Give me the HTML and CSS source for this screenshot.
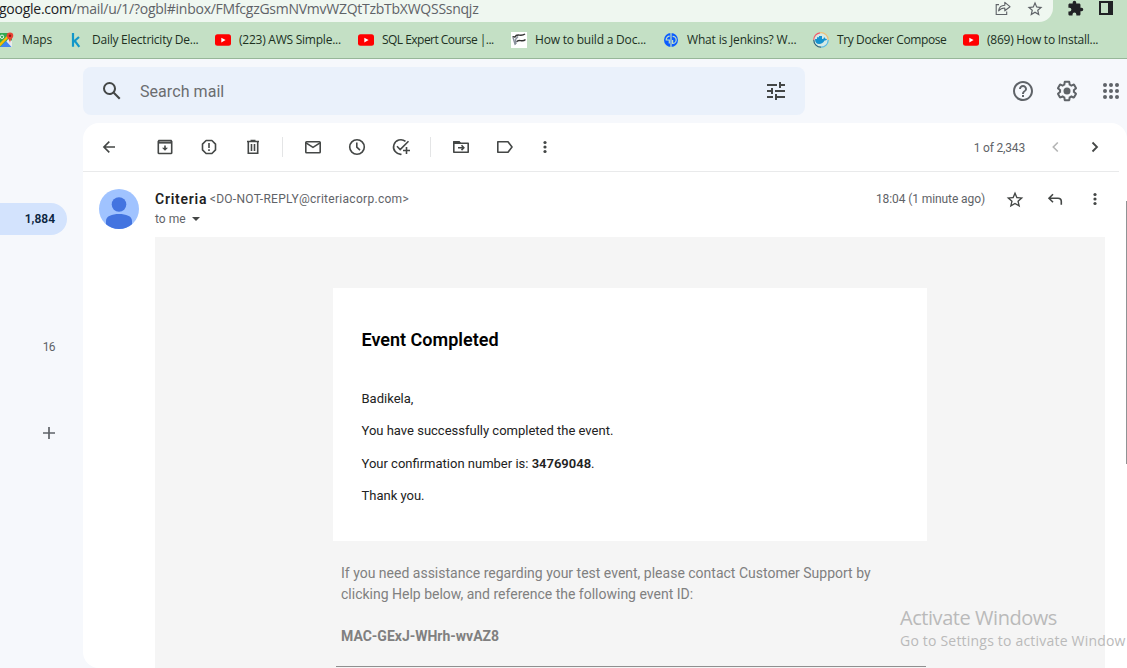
FILE: index.html
```html
<!DOCTYPE html>
<html lang="en">
<head>
<meta charset="utf-8">
<title>Event Completed - Gmail</title>
<link rel="stylesheet" href="styles.css">
</head>
<body>
<div class="window">
  <div class="chrome-top">
    <div class="omnibox">
      <div class="url"><span class="host">google.com</span>/mail/u/1/?ogbl#inbox/FMfcgzGsmNVmvWZQtTzbTbXWQSSsnqjz</div>
      <svg class="share" width="16" height="16" viewBox="0 0 16 16" fill="none" stroke="#5f6368" stroke-width="1.1"><path d="M4 4.6H1.2V14.5H11.7V11.5"/><path d="M3.6 10.8C4 7.4 6.300 5.300 9.800 5.200V2.300L15 6.700L9.800 10.800V8C7.200 8 5.200 8.800 3.600 10.800Z" stroke-linejoin="round"/></svg>
      <svg width="18" height="18" viewBox="0 0 24 24" fill="#5f6368"><path d="M22 9.240l-7.190-.62L12 2 9.190 8.630 2 9.240l5.460 4.730L5.820 21 12 17.270 18.180 21l-1.630-7.030L22 9.240zM12 15.400l-3.760 2.270 1-4.280-3.320-2.880 4.380-.38L12 6.100l1.710 4.040 4.380.38-3.320 2.880 1 4.280L12 15.400z"/></svg>
    </div>
    <svg class="puzzle" width="17" height="17" viewBox="0 0 24 24" fill="#202124"><path d="M20.500 11H19V7c0-1.100-.9-2-2-2h-4V3.500a2.500 2.500 0 0 0-5 0V5H4c-1.100 0-2 .9-2 2v3.800h1.500a2.700 2.700 0 0 1 0 5.400H2V20c0 1.100.9 2 2 2h3.800v-1.500a2.700 2.700 0 0 1 5.400 0V22H17c1.100 0 2-.9 2-2v-4h1.500a2.500 2.500 0 0 0 0-5z"/></svg>
    <div class="sidepanel"></div>
  </div>

  <div class="bookmarks">
    <div class="bm"><svg width="16" height="16" viewBox="0 0 16 16"><rect x="0" y="1" width="14" height="14" rx="1.500" fill="#34a853"/><path d="M4 15L11 6L14 9V15Z" fill="#e8eaed"/><path d="M2 15L8 9L13.500 15Z" fill="#4285f4"/><path d="M0 13L9.500 3.500L11 5L1.500 15H0Z" fill="#fbbc04"/><circle cx="4" cy="4.800" r="1.700" fill="none" stroke="#e6f4ea"/><path d="M12 0.500a3.300 3.300 0 0 1 3.300 3.300c0 2.400-2.700 3.200-3.300 7.200-.6-4-3.300-4.800-3.300-7.200A3.300 3.300 0 0 1 12 .5z" fill="#ea4335"/><circle cx="12" cy="3.800" r="1.200" fill="#8b1a10"/></svg><span class="t1">Maps</span></div>
    <div class="bm"><svg width="16" height="16" viewBox="0 0 16 16" fill="none" stroke="#1297c9" stroke-width="2.200"><path d="M5 1V14.800M5 10.300L11 5M6.800 8.800L11.300 14.800"/></svg><span class="t2">Daily Electricity De...</span></div>
    <div class="bm"><svg width="16" height="16" viewBox="0 0 16 16"><rect y="2.300" width="16" height="11.500" rx="2.500" fill="#f00"/><path d="M6.300 5.700L10.600 8L6.300 10.400Z" fill="#fff"/></svg><span class="t3">(223) AWS Simple...</span></div>
    <div class="bm"><svg width="16" height="16" viewBox="0 0 16 16"><rect y="2.300" width="16" height="11.500" rx="2.500" fill="#f00"/><path d="M6.300 5.700L10.600 8L6.300 10.400Z" fill="#fff"/></svg><span class="t4">SQL Expert Course |...</span></div>
    <div class="bm"><svg width="16" height="16" viewBox="0 0 16 16" fill="none" stroke="#333" stroke-width="1.400"><rect width="16" height="16" fill="#fff" stroke="none"/><path d="M1.500 4.800L4 5C6 .5 9.500 5.500 14 2"/><path d="M5.500 9.800C8 6.300 11 11 14.500 7.500"/><path d="M2 5.500L4.300 13M5 12L4.500 7.500L7 4.500" stroke="#89909c"/></svg><span class="t5">How to build a Doc...</span></div>
    <div class="bm"><svg width="16" height="16" viewBox="0 0 16 16"><circle cx="8" cy="8" r="7" fill="#0b5cff"/><path d="M8 1V15M6.700 4.200A3.500 3.500 0 0 0 3.200 8H6.300V11.500M9.600 4.300A3.600 3.600 0 0 1 9.600 11.500V8" fill="none" stroke="#c4e0c5" stroke-width="1.200"/></svg><span class="t6">What is Jenkins? W...</span></div>
    <div class="bm"><svg width="16" height="16" viewBox="0 0 16 16"><circle cx="8" cy="8" r="7.200" fill="#d4e9e5"/><g fill="none" stroke-width="1.200"><path d="M.8 8A7.200 7.200 0 0 1 7 .8" stroke="#ef5b6b"/><path d="M7 .8A7.200 7.200 0 0 1 15.200 8" stroke="#efc078"/><path d="M15.200 8A7.200 7.200 0 0 1 8 15.200" stroke="#55b9e6"/><path d="M8 15.200A7.200 7.200 0 0 1 .8 8" stroke="#2b5f78"/></g><path d="M2 7H4V5.300H6V4H9V7C10 7 11 6.500 11 5.200C12 5.600 12.300 6.300 12.300 6.700L14 7C13.500 8.500 12.500 8.600 11.500 8.600C10.500 11 8.500 12 6.200 12C3.500 12 2 10.500 2 7Z" fill="#1492cf"/></svg><span class="t7">Try Docker Compose</span></div>
    <div class="bm"><svg width="16" height="16" viewBox="0 0 16 16"><rect y="2.300" width="16" height="11.500" rx="2.500" fill="#f00"/><path d="M6.300 5.700L10.600 8L6.300 10.400Z" fill="#fff"/></svg><span class="t8">(869) How to Install...</span></div>
  </div>

  <div class="gheader">
    <div class="search">
      <svg width="24" height="24" viewBox="0 0 24 24" fill="#444746"><path d="M20.490 19l-5.730-5.730C15.530 12.200 16 10.910 16 9.500A6.500 6.500 0 1 0 9.500 16c1.410 0 2.700-.47 3.770-1.240L19 20.490 20.490 19zM5 9.500C5 7.010 7.010 5 9.500 5S14 7.010 14 9.500 11.990 14 9.500 14 5 11.990 5 9.500z"/></svg>
      <span class="placeholder">Search mail</span>
      <svg width="24" height="24" viewBox="0 0 24 24" fill="#444746"><path d="M3 17v2h6v-2H3zM3 5v2h10V5H3zm10 16v-2h8v-2h-8v-2h-2v6h2zM7 9v2H3v2h4v2h2V9H7zm14 4v-2H11v2h10zm-6-4h2V7h4V5h-4V3h-2v6z"/></svg>
    </div>
    <div class="gicons">
      <svg width="24" height="24" viewBox="0 0 24 24" fill="#5f6368"><path d="M11 18h2v-2h-2v2zm1-16C6.480 2 2 6.480 2 12s4.480 10 10 10 10-4.480 10-10S17.520 2 12 2zm0 18c-4.410 0-8-3.590-8-8s3.590-8 8-8 8 3.590 8 8-3.590 8-8 8zm0-14c-2.210 0-4 1.790-4 4h2c0-1.100.9-2 2-2s2 .9 2 2c0 2-3 1.750-3 5h2c0-2.250 3-2.500 3-5 0-2.210-1.790-4-4-4z"/></svg>
      <svg width="24" height="24" viewBox="0 0 24 24" fill="#5f6368"><path d="M13.850 22.250h-3.700c-.74 0-1.360-.54-1.450-1.270l-.27-1.890c-.27-.14-.53-.29-.79-.46l-1.800.72c-.7.260-1.470-.03-1.810-.65L2.200 15.530c-.35-.66-.2-1.440.36-1.880l1.530-1.190c-.01-.15-.02-.3-.02-.46 0-.15.010-.31.020-.46l-1.520-1.190c-.59-.45-.74-1.260-.37-1.880l1.850-3.190c.34-.62 1.110-.9 1.790-.63l1.810.73c.26-.17.520-.32.780-.46l.27-1.910c.09-.7.710-1.250 1.440-1.250h3.700c.74 0 1.360.54 1.450 1.270l.27 1.890c.27.140.53.290.79.460l1.800-.72c.71-.26 1.480.03 1.820.65l1.840 3.180c.36.660.200 1.440-.36 1.880l-1.520 1.190c.01.150.02.300.02.460s-.01.310-.02.460l1.520 1.190c.56.450.72 1.230.37 1.860l-1.860 3.220c-.34.620-1.110.900-1.800.630l-1.800-.72c-.26.170-.52.320-.78.460l-.27 1.910c-.1.680-.72 1.220-1.460 1.220zm-3.230-2h2.760l.37-2.550.53-.22c.44-.18.880-.44 1.340-.78l.45-.34 2.380.96 1.380-2.400-2.030-1.580.07-.56c.03-.26.060-.51.060-.78s-.03-.53-.06-.78l-.07-.56 2.030-1.580-1.390-2.400-2.390.96-.45-.35c-.42-.32-.87-.58-1.330-.77l-.52-.22-.37-2.550h-2.760l-.37 2.550-.53.210c-.44.190-.88.440-1.340.79l-.45.330-2.380-.95-1.390 2.390 2.030 1.580-.07.560a7 7 0 0 0-.06.790c0 .26.020.53.060.78l.07.560-2.030 1.580 1.380 2.400 2.390-.96.450.350c.43.330.86.580 1.330.77l.53.220.38 2.550z"/><circle cx="12" cy="12" r="3.500"/></svg>
      <svg width="24" height="24" viewBox="0 0 24 24" fill="#5f6368"><circle cx="6" cy="6" r="2"/><circle cx="12" cy="6" r="2"/><circle cx="18" cy="6" r="2"/><circle cx="6" cy="12" r="2"/><circle cx="12" cy="12" r="2"/><circle cx="18" cy="12" r="2"/><circle cx="6" cy="18" r="2"/><circle cx="12" cy="18" r="2"/><circle cx="18" cy="18" r="2"/></svg>
    </div>
  </div>

  <div class="main">
    <div class="sidebar">
      <div class="pill">1,884</div>
      <div class="count">16</div>
      <svg class="plus" width="20" height="20" viewBox="0 0 20 20" fill="none" stroke="#5f6368" stroke-width="1.700"><path d="M10 4V16M4 10H16"/></svg>
    </div>
    <div class="panel">
      <div class="toolbar">
        <svg class="back" width="20" height="20" viewBox="0 0 20 20" fill="none" stroke="#444746" stroke-width="1.600"><path d="M16 10H5.200M10.300 4.600L4.900 10L10.300 15.400"/></svg>
        <svg width="20" height="20" viewBox="0 0 20 20"><path d="M4 3.500H16L16.700 4.500V16A.7 .7 0 0 1 16 16.500H4A.7 .7 0 0 1 3.300 16V4.500Z" fill="none" stroke="#444746" stroke-width="1.600"/><path d="M3.500 3.500H16.500V6.600H3.500Z" fill="#444746"/><path d="M4.500 4.600H15.500" stroke="#aaa" stroke-width=".8"/><path d="M9.200 8.500H10.800V10.800H13L10 13.800L7 10.800H9.200Z" fill="#444746"/></svg>
        <svg width="20" height="20" viewBox="0 0 20 20" fill="none" stroke="#444746" stroke-width="1.600"><path d="M7.100 3.500H12.900L16.500 7.100V12.900L12.900 16.500H7.100L3.500 12.900V7.100Z" stroke-linejoin="round"/><path d="M10 5.900V11M10 12.300V14"/></svg>
        <svg width="20" height="20" viewBox="0 0 20 20" fill="none" stroke="#444746" stroke-width="1.600"><path d="M4 4.500H16M7.500 3.500H12.500M5.300 5V16.200H14.700V5M8.500 7V14M11.500 7V14"/></svg>
        <i class="sep"></i>
        <svg width="20" height="20" viewBox="0 0 20 20" fill="none" stroke="#444746" stroke-width="1.600"><rect x="2.800" y="4.800" width="14.400" height="10.900" rx=".8"/><path d="M3 5.800L10 10.300L17 5.800"/></svg>
        <svg width="20" height="20" viewBox="0 0 20 20" fill="none" stroke="#444746" stroke-width="1.600"><circle cx="10" cy="10" r="7.300"/><path d="M9.800 5.500V10.200L13 13.200"/></svg>
        <svg width="20" height="20" viewBox="0 0 20 20" fill="none" stroke="#444746" stroke-width="1.600"><path d="M14.500 4.400A7.300 7.300 0 1 0 10.500 17.300M6 9.300L9.200 12.500L17.500 4.300M15.500 10V17M12 13.500H19"/></svg>
        <i class="sep"></i>
        <svg width="20" height="20" viewBox="0 0 20 20" fill="none" stroke="#444746" stroke-width="1.600"><path d="M2.800 4.800H8L9.500 6.300H17.200V15.200H2.800Z" stroke-linejoin="round"/><path d="M3 5H8L9 6.300H3Z" fill="#444746"/><path d="M7 10.700H12.500M10.500 8.300L12.800 10.700L10.500 13.100"/></svg>
        <svg width="20" height="20" viewBox="0 0 20 20" fill="none" stroke="#444746" stroke-width="1.600"><path d="M2.800 4.800H13L17 10L13 15.200H2.800Z" stroke-linejoin="round"/></svg>
        <svg class="more" width="20" height="20" viewBox="0 0 20 20" fill="#444746"><circle cx="10" cy="5.500" r="1.600"/><circle cx="10" cy="10" r="1.600"/><circle cx="10" cy="14.500" r="1.600"/></svg>
        <span class="pager">1 of 2,343</span>
        <svg class="prev" width="20" height="20" viewBox="0 0 20 20" fill="none" stroke="#b4b5b5" stroke-width="1.600"><path d="M12.800 5.500L8.300 10L12.800 14.500"/></svg>
        <svg class="next" width="20" height="20" viewBox="0 0 20 20" fill="none" stroke="#444746" stroke-width="1.800"><path d="M7.500 5.500L12 10L7.500 14.500"/></svg>
      </div>
      <div class="mhead">
        <svg class="avatar" width="40" height="40" viewBox="0 0 40 40"><circle cx="20" cy="20" r="20" fill="#a0c3ff"/><circle cx="20" cy="15.500" r="7.300" fill="#4374e0"/><path d="M7 35.200V32C7 27 13 25 20 25S33 27 33 32V35.200A20 20 0 0 1 7 35.200Z" fill="#4374e0"/></svg>
        <div class="from">
          <div class="line1"><b>Criteria</b><span class="email">&lt;DO-NOT-REPLY@criteriacorp.com&gt;</span></div>
          <div class="line2"><span class="tome">to me</span><i class="caret"></i></div>
        </div>
        <span class="time">18:04 (1 minute ago)</span>
        <div class="mactions">
          <svg width="20" height="20" viewBox="0 0 24 24" fill="#444746"><path transform="translate(0 1)" d="M22 9.240l-7.190-.62L12 2 9.190 8.630 2 9.240l5.460 4.730L5.820 21 12 17.270 18.180 21l-1.630-7.030L22 9.240zM12 15.400l-3.760 2.270 1-4.280-3.320-2.880 4.380-.38L12 6.100l1.710 4.040 4.380.38-3.320 2.880 1 4.280L12 15.400z"/></svg>
          <svg width="20" height="20" viewBox="0 0 20 20" fill="none" stroke="#444746" stroke-width="1.600"><path d="M8 5.300L4 9.300L8 13.300M4.200 9.300H13A3.300 3.300 0 0 1 16.300 12.600V15.800"/></svg>
          <svg width="20" height="20" viewBox="0 0 20 20" fill="#444746"><circle cx="10" cy="5.500" r="1.600"/><circle cx="10" cy="10" r="1.600"/><circle cx="10" cy="14.500" r="1.600"/></svg>
        </div>
      </div>
      <div class="mail">
        <div class="card">
          <h1>Event Completed</h1>
          <p class="p1">Badikela,</p>
          <p class="p2">You have successfully completed the event.</p>
          <p class="p3">Your confirmation number is: <b>34769048</b>.</p>
          <p class="p4">Thank you.</p>
        </div>
        <div class="help">
          <div>If you need assistance regarding your test event, please contact Customer Support by</div>
          <div>clicking Help below, and reference the following event ID:</div>
          <div class="eid">MAC-GExJ-WHrh-wvAZ8</div>
        </div>
        <div class="rule"></div>
      </div>
    </div>
  </div>
  <div class="scroll"></div>
  <div class="activate"><div class="a1">Activate Windows</div><div class="a2">Go to Settings to activate Window</div></div>
</div>
</body>
</html>
```
FILE: styles.css
```css
* { box-sizing: border-box; }
body { margin: 0; font-family: Roboto, "Liberation Sans", sans-serif; }
svg { display: block; flex: none; }
span, .url, .pill, .count, h1, p, .help div { white-space: nowrap; }
.window { position: relative; width: 1127px; height: 668px; overflow: hidden; background: #f6f8fc; display: flex; flex-direction: column; }

.chrome-top { height: 22px; flex: none; background: #c4e0c5; display: flex; }
.omnibox { width: 1053px; height: 22px; background: #eff7f0; border-radius: 0 0 14px 0; display: flex; align-items: flex-start; }
.url { width: 995px; font: 14px/17px "Open Sans", sans-serif; color: #5f6368; letter-spacing: -.26px; margin-left: -1px; }
.host { color: #202124; }
.share { margin: 0 15px 0 1px; }
.puzzle { margin: 0 0 0 14px; }
.sidepanel { width: 14px; height: 14px; margin: 1px 0 0 15px; border: 2px solid #202124; border-right-width: 5px; }

.bookmarks { height: 37px; flex: none; background: #c4e0c5; border-bottom: 1px solid #97b699; padding-top: 10px; display: grid; grid-template-columns: 68px 147px 143px 153px 152px 150px 150px 1fr; align-items: start; font: 12px/16px "Open Sans", sans-serif; color: #20301f; }
.bm { display: flex; gap: 8px; letter-spacing: -.24px; }
.bm:first-child { margin-left: -2px; }
.t1 { letter-spacing: -.1px; }
.t4 { letter-spacing: -.53px; }
.t5 { letter-spacing: -.2px; }
.t6 { letter-spacing: -.17px; }
.t7 { letter-spacing: -.38px; }

.gheader { height: 64px; flex: none; padding: 8px 0 0 83px; display: flex; }
.search { width: 722px; height: 48px; background: #eaf1fb; border-radius: 8px; display: flex; align-items: center; padding: 0 17px; }
.placeholder { flex: 1; margin-left: 16px; font-size: 16px; letter-spacing: .06px; color: #6a6d70; }
.gicons { margin-left: 206px; height: 48px; display: flex; align-items: center; gap: 20px; }

.main { flex: 1; display: flex; min-height: 0; }
.sidebar { width: 83px; padding-top: 80px; }
.pill { width: 67px; height: 32px; border-radius: 0 16px 16px 0; background: #d3e3fd; font: 600 12px/32px Roboto, sans-serif; text-align: right; padding-right: 12px; color: #0b2540; }
.count { width: 55px; margin-top: 102px; font-size: 12px; line-height: 20px; letter-spacing: -.6px; text-align: right; color: #5f6368; }
.plus { margin: 66px 0 0 39px; }

.panel { width: 1044px; background: #fff; border-radius: 16px 16px 0 16px; }
.toolbar { height: 49px; margin-right: 8px; border-bottom: 1px solid #e9eaeb; display: flex; align-items: center; padding-left: 16px; gap: 24px; }
.toolbar .back { margin-right: 12px; }
.sep { width: 1px; height: 20px; background: #e4e5e6; margin: 0 -4px 0 -5px; }
.toolbar .more { margin-left: -4px; }
.pager { margin-left: auto; font-size: 12px; letter-spacing: -.17px; color: #5f6368; padding-top: 1px; }
.toolbar .prev { margin-left: -4px; }
.toolbar .next { margin: 0 14px 0 -4px; }

.mhead { height: 65px; padding: 17px 22px 0 16px; display: flex; }
.from { margin-left: 16px; color: #5f6368; font-size: 12px; }
.line1 { height: 20px; line-height: 20px; display: flex; gap: 2.500px; }
.line1 b { font-size: 14px; color: #1f1f1f; font-weight: 600; letter-spacing: .75px; }
.email { letter-spacing: .29px; }
.line2 { height: 20px; line-height: 20px; display: flex; align-items: center; gap: 6px; }
.caret { border: 4px solid transparent; border-top-color: #444746; border-bottom: 0; }
.time { margin-left: auto; font-size: 12px; line-height: 20px; letter-spacing: -.09px; color: #5f6368; }
.mactions { display: flex; gap: 20px; margin-left: 20px; }

.mail { margin-left: 72px; width: 950px; height: 431px; background: #f5f5f5; padding-top: 51px; }
.card { width: 594px; height: 253px; margin: 0 auto; background: #fff; padding: 40px 0 0 28.500px; color: #222; font-size: 13px; }
h1 { margin: 0; font-size: 18px; line-height: 24px; font-weight: 600; color: #000; }
p { margin: 0; line-height: 20px; height: 20px; }
.p1 { margin-top: 37px; }
.p2, .p4 { margin-top: 12px; }
.p3 { margin-top: 13px; }
.p3 b { font-weight: 600; }
.help { margin: 22px 0 0 186px; font-size: 14px; line-height: 21px; color: #808080; }
.help .eid { margin-top: 21px; font-weight: 700; }
.rule { width: 590px; height: 1px; background: #8f8f8f; margin: 19px 0 0 181px; }

.scroll { position: absolute; left: 1126px; top: 201px; width: 1px; height: 263px; background: #909395; }
.activate { position: absolute; left: 900px; top: 604px; width: 227px; white-space: nowrap; color: #bababa; font-family: "Open Sans", sans-serif; }
.a1 { font-size: 20px; line-height: 28px; letter-spacing: -.45px; }
.a2 { font-size: 14px; line-height: 18px; letter-spacing: .2px; }
```
